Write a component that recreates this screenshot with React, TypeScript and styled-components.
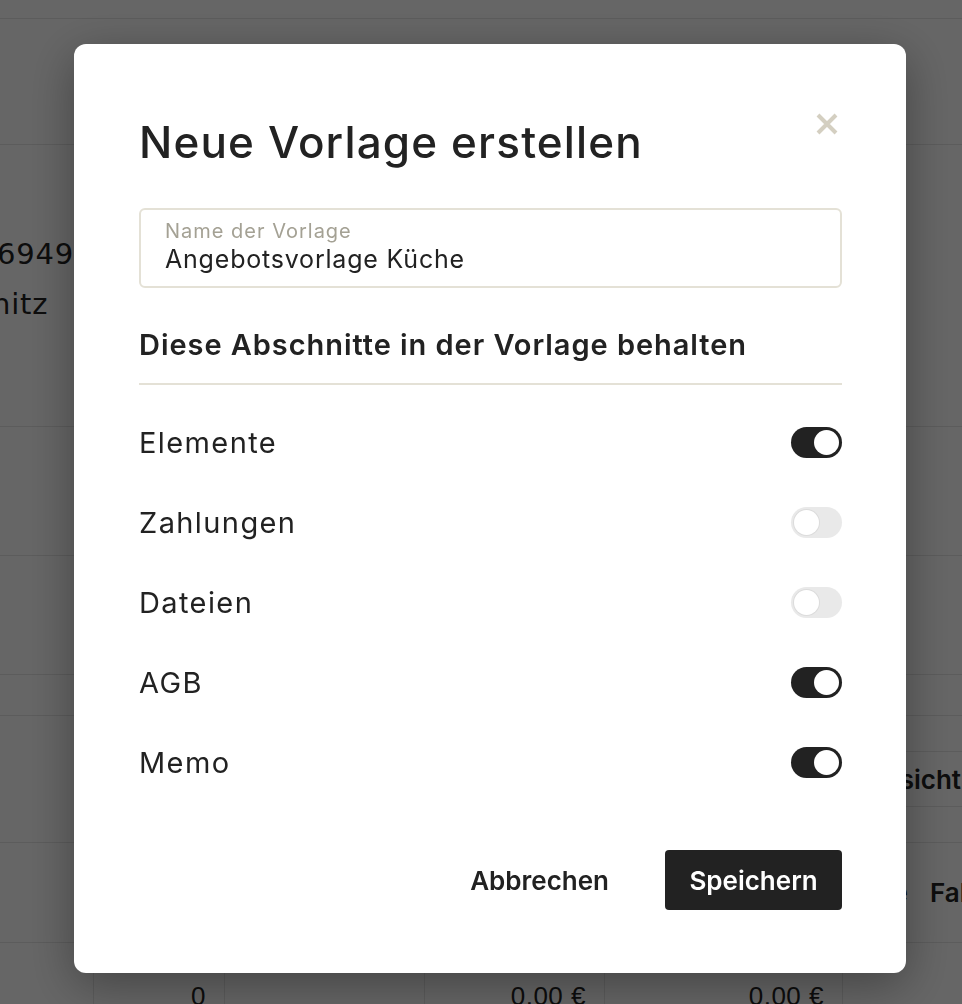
import { useState } from 'react'
import styled, { createGlobalStyle } from 'styled-components'

const GlobalStyle = createGlobalStyle`
  html, body {
    margin: 0;
    height: 100%;
    overflow: hidden;
  }

  body {
    font-family: Inter, "Liberation Sans", sans-serif;
    background: #fff;
    color: #222;
  }

  * {
    box-sizing: border-box;
  }
`;

/* ---------- page underneath the dialog ---------- */

const Page = styled.div`
  width: 962px;
  height: 1004px;
  overflow: hidden;
  display: flex;
  flex-direction: column;
`;

const Band = styled.div<{ $h?: number }>`
  flex: ${p => (p.$h ? `0 0 ${p.$h}px` : '1 1 auto')};
  border-bottom: 1px solid #e6e6e6;
  display: flex;
  align-items: center;
  overflow: hidden;
  font-size: 26px;
  white-space: nowrap;
`;

const Address = styled.div`
  align-self: flex-start;
  padding-top: 84px;
  display: flex;
  flex-direction: column;
  line-height: 50px;
`;

const AddressLine = styled.span<{ $shift: number; $strong?: boolean }>`
  margin-left: ${p => p.$shift}px;
  font-weight: ${p => (p.$strong ? 500 : 400)};
  font-family: "DejaVu Sans", sans-serif;
  font-size: 29px;
  letter-spacing: 0.8px;
`;

const ViewButton = styled.div`
  margin-left: auto;
  margin-right: -40px;
  height: 56px;
  padding: 0 40px 0 24px;
  border: 1px solid #e6e6e6;
  display: flex;
  align-items: center;
  font-weight: 600;
  font-size: 26px;
`;

const HeadCells = styled.div`
  margin-left: 821px;
  display: flex;
  gap: 22px;
  font-weight: 600;
  font-size: 26px;
`;

const TotalsRow = styled.div`
  flex: 1 1 auto;
  display: grid;
  grid-template-columns: 93px 131px 200px 180px 238px 1fr;
`;

const Cell = styled.div<{ $edge?: boolean }>`
  border-left: ${p => (p.$edge ? 'none' : '1px solid #e6e6e6')};
  padding: 38px 18px 0 0;
  text-align: right;
  font-size: 26px;
  line-height: 30px;
  font-family: "Liberation Sans", sans-serif;
  letter-spacing: 0.5px;
`;

/* ---------- dialog ---------- */

const Backdrop = styled.div`
  position: fixed;
  inset: 0;
  background: rgba(0, 0, 0, 0.6);
  display: flex;
  align-items: flex-start;
  padding: 44px 0 0 74px;
`;

const Dialog = styled.div`
  width: 832px;
  height: 929px;
  background: #fff;
  border-radius: 12px;
  box-shadow: 0 12px 48px rgba(0, 0, 0, 0.35);
  padding: 72px 64px 63px 65px;
  display: flex;
  flex-direction: column;
`;

const Header = styled.div`
  display: flex;
  justify-content: space-between;
  align-items: flex-start;
`;

const Title = styled.h2`
  margin: 0;
  font-size: 44px;
  line-height: 52px;
  font-weight: 500;
  letter-spacing: 1.15px;
  color: #222;
`;

const CloseButton = styled.button`
  margin: -3px 4px 0 0;
  width: 22px;
  height: 22px;
  padding: 0;
  border: none;
  background: none;
  cursor: pointer;
  display: flex;
`;

const Field = styled.label`
  margin-top: 40px;
  height: 80px;
  border: 2px solid #e4e1d6;
  border-radius: 6px;
  padding: 10px 24px 0;
  display: flex;
  flex-direction: column;
`;

const FieldLabel = styled.span`
  font-size: 20px;
  line-height: 22px;
  letter-spacing: 1px;
  color: #a4a194;
`;

const FieldInput = styled.input`
  border: none;
  outline: none;
  padding: 0;
  margin: 0;
  font: inherit;
  font-size: 25px;
  line-height: 34px;
  height: 34px;
  letter-spacing: 0.8px;
  color: #222;
  background: transparent;
`;

const SectionTitle = styled.h3`
  margin: 39px 0 0;
  font-size: 29px;
  line-height: 36px;
  font-weight: 600;
  letter-spacing: 0.95px;
  color: #222;
`;

const Divider = styled.hr`
  margin: 20px 0 17px;
  border: none;
  height: 2px;
  background: #e4e1d6;
`;

const Row = styled.div`
  height: 80px;
  display: flex;
  align-items: center;
  justify-content: space-between;
  font-size: 29px;
  letter-spacing: 1.4px;
  color: #222;
`;

const Track = styled.button<{ $on: boolean }>`
  position: relative;
  width: 51px;
  height: 31px;
  padding: 0;
  border: none;
  border-radius: 16px;
  cursor: pointer;
  background: ${p => (p.$on ? '#222' : '#e9e9e9')};

  &::after {
    content: '';
    position: absolute;
    top: 3px;
    left: ${p => (p.$on ? '23px' : '3px')};
    width: 25px;
    height: 25px;
    border-radius: 50%;
    background: #fff;
    box-shadow: ${p => (p.$on ? 'none' : '0 0 0 1px #dcdcdc')};
  }
`;

const Footer = styled.div`
  margin-top: auto;
  display: flex;
  justify-content: flex-end;
  align-items: center;
  gap: 32px;
`;

const GhostButton = styled.button`
  height: 60px;
  padding: 0 24px;
  border: none;
  background: none;
  font-family: inherit;
  font-size: 26px;
  font-weight: 600;
  color: #222;
  cursor: pointer;
`;

const PrimaryButton = styled(GhostButton)`
  width: 177px;
  padding: 0;
  border-radius: 4px;
  background: #222;
  color: #fff;
`;

const sections = [
  { key: 'elemente', label: 'Elemente', on: true },
  { key: 'zahlungen', label: 'Zahlungen', on: false },
  { key: 'dateien', label: 'Dateien', on: false },
  { key: 'agb', label: 'AGB', on: true },
  { key: 'memo', label: 'Memo', on: true },
];

const App = () => {
  const [name, setName] = useState('Angebotsvorlage Küche')
  const [keep, setKeep] = useState<Record<string, boolean>>(
    Object.fromEntries(sections.map(s => [s.key, s.on]))
  )

  return (
    <>
      <GlobalStyle />
      <Page>
        <Band $h={19} />
        <Band $h={126} />
        <Band $h={282}>
          <Address>
            <AddressLine $shift={-3} $strong>6949</AddressLine>
            <AddressLine $shift={-8}>nitz</AddressLine>
          </Address>
        </Band>
        <Band $h={129} />
        <Band $h={119} />
        <Band $h={41} />
        <Band $h={127}>
          <ViewButton>Ansicht</ViewButton>
        </Band>
        <Band $h={100}>
          <HeadCells>
            <span>Menge</span>
            <span>Faktor</span>
          </HeadCells>
        </Band>
        <TotalsRow>
          <Cell $edge />
          <Cell>0</Cell>
          <Cell />
          <Cell>0,00 €</Cell>
          <Cell>0,00 €</Cell>
          <Cell />
        </TotalsRow>
      </Page>

      <Backdrop>
        <Dialog role="dialog" aria-modal="true">
          <Header>
            <Title>Neue Vorlage erstellen</Title>
            <CloseButton aria-label="Schließen">
              <svg width="22" height="22" viewBox="0 0 22 22">
                <path d="M2 2 L20 20 M20 2 L2 20" stroke="#d4cfc1" strokeWidth="4" />
              </svg>
            </CloseButton>
          </Header>

          <Field>
            <FieldLabel>Name der Vorlage</FieldLabel>
            <FieldInput value={name} onChange={e => setName(e.target.value)} />
          </Field>

          <SectionTitle>Diese Abschnitte in der Vorlage behalten</SectionTitle>
          <Divider />

          {sections.map(s => (
            <Row key={s.key}>
              <span>{s.label}</span>
              <Track
                $on={keep[s.key]}
                aria-label={s.label}
                onClick={() => setKeep(k => ({ ...k, [s.key]: !k[s.key] }))}
              />
            </Row>
          ))}

          <Footer>
            <GhostButton>Abbrechen</GhostButton>
            <PrimaryButton>Speichern</PrimaryButton>
          </Footer>
        </Dialog>
      </Backdrop>
    </>
  )
}

export default App
